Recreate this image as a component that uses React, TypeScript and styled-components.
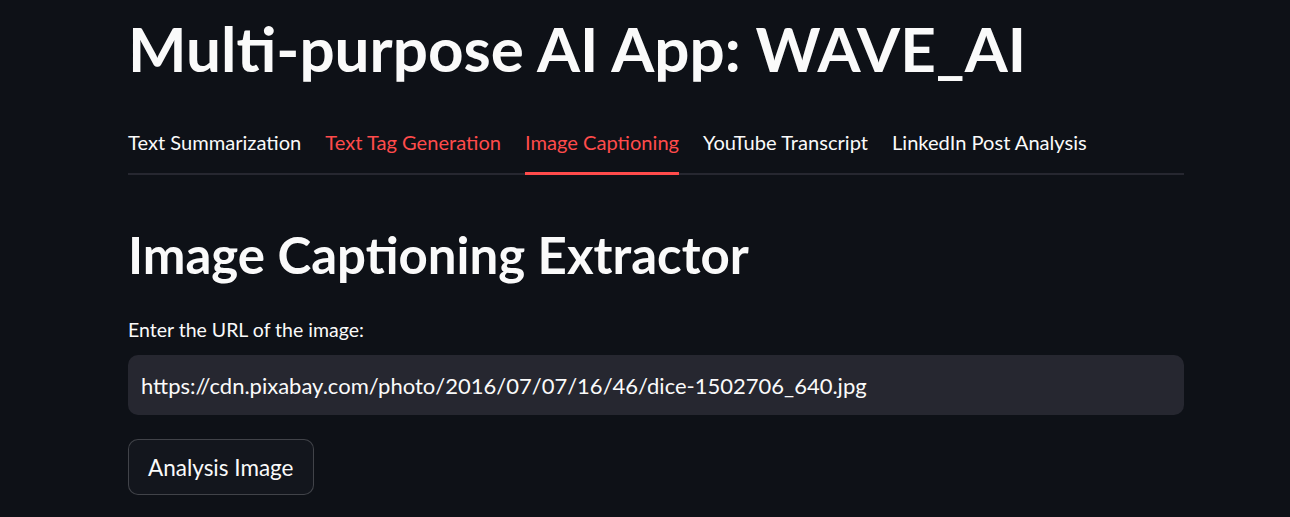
import styled, { createGlobalStyle } from 'styled-components'

const GlobalStyle = createGlobalStyle`
  html, body {
    margin: 0;
    padding: 0;
    background: #0e1117;
  }
  body {
    font-family: "Source Sans Pro", Lato, "Noto Sans", sans-serif;
    color: #fafafa;
  }
`

const tabs = [
  { label: 'Text Summarization', tone: 'plain' },
  { label: 'Text Tag Generation', tone: 'hover' },
  { label: 'Image Captioning', tone: 'active' },
  { label: 'YouTube Transcript', tone: 'plain' },
  { label: 'LinkedIn Post Analysis', tone: 'plain' },
] as const

export default function App() {
  return (
    <>
      <GlobalStyle />
      <Main>
        <Title>Multi-purpose AI App: WAVE_AI</Title>
        <TabList>
          {tabs.map((t) => (
            <Tab key={t.label} $tone={t.tone}>
              {t.label}
            </Tab>
          ))}
        </TabList>
        <Heading>Image Captioning Extractor</Heading>
        <Label htmlFor="url">Enter the URL of the image:</Label>
        <Input
          id="url"
          readOnly
          value="https://cdn.pixabay.com/photo/2016/07/07/16/46/dice-1502706_640.jpg"
        />
        <Button>Analysis Image</Button>
      </Main>
    </>
  )
}

const Main = styled.main`
  width: 1056px;
  padding: 0 0 0 128px;
  display: flex;
  flex-direction: column;
  align-items: flex-start;
`

const Title = styled.h1`
  margin: 11px 0 0;
  font-size: 62px;
  font-weight: 700;
  line-height: 74px;
`

const TabList = styled.nav`
  align-self: stretch;
  display: flex;
  gap: 24px;
  margin-top: 37px;
  border-bottom: 2px solid #262730;
`

const Tab = styled.div<{ $tone: 'plain' | 'hover' | 'active' }>`
  font-size: 20.1px;
  line-height: 24px;
  padding: 8px 0 18px;
  margin-bottom: -2px;
  color: ${(p) => (p.$tone === 'plain' ? '#fafafa' : '#ff4b4b')};
  border-bottom: 3px solid ${(p) => (p.$tone === 'active' ? '#ff4b4b' : 'transparent')};
`

const Heading = styled.h2`
  margin: 50px 0 0;
  font-size: 51px;
  font-weight: 700;
  line-height: 60px;
`

const Label = styled.label`
  margin-top: 33px;
  font-size: 19.5px;
  line-height: 24px;
`

const Input = styled.input`
  box-sizing: border-box;
  align-self: stretch;
  margin-top: 13px;
  height: 60px;
  padding: 0 13px;
  border: none;
  border-radius: 10px;
  background: #262730;
  color: #fafafa;
  font: inherit;
  font-size: 22px;
  outline: none;
`

const Button = styled.button`
  box-sizing: border-box;
  margin-top: 24px;
  height: 56px;
  padding: 0 19px;
  border: 1px solid rgba(250, 250, 250, 0.2);
  border-radius: 10px;
  background: #13161d;
  color: #fafafa;
  font: inherit;
  font-size: 22.5px;
`
